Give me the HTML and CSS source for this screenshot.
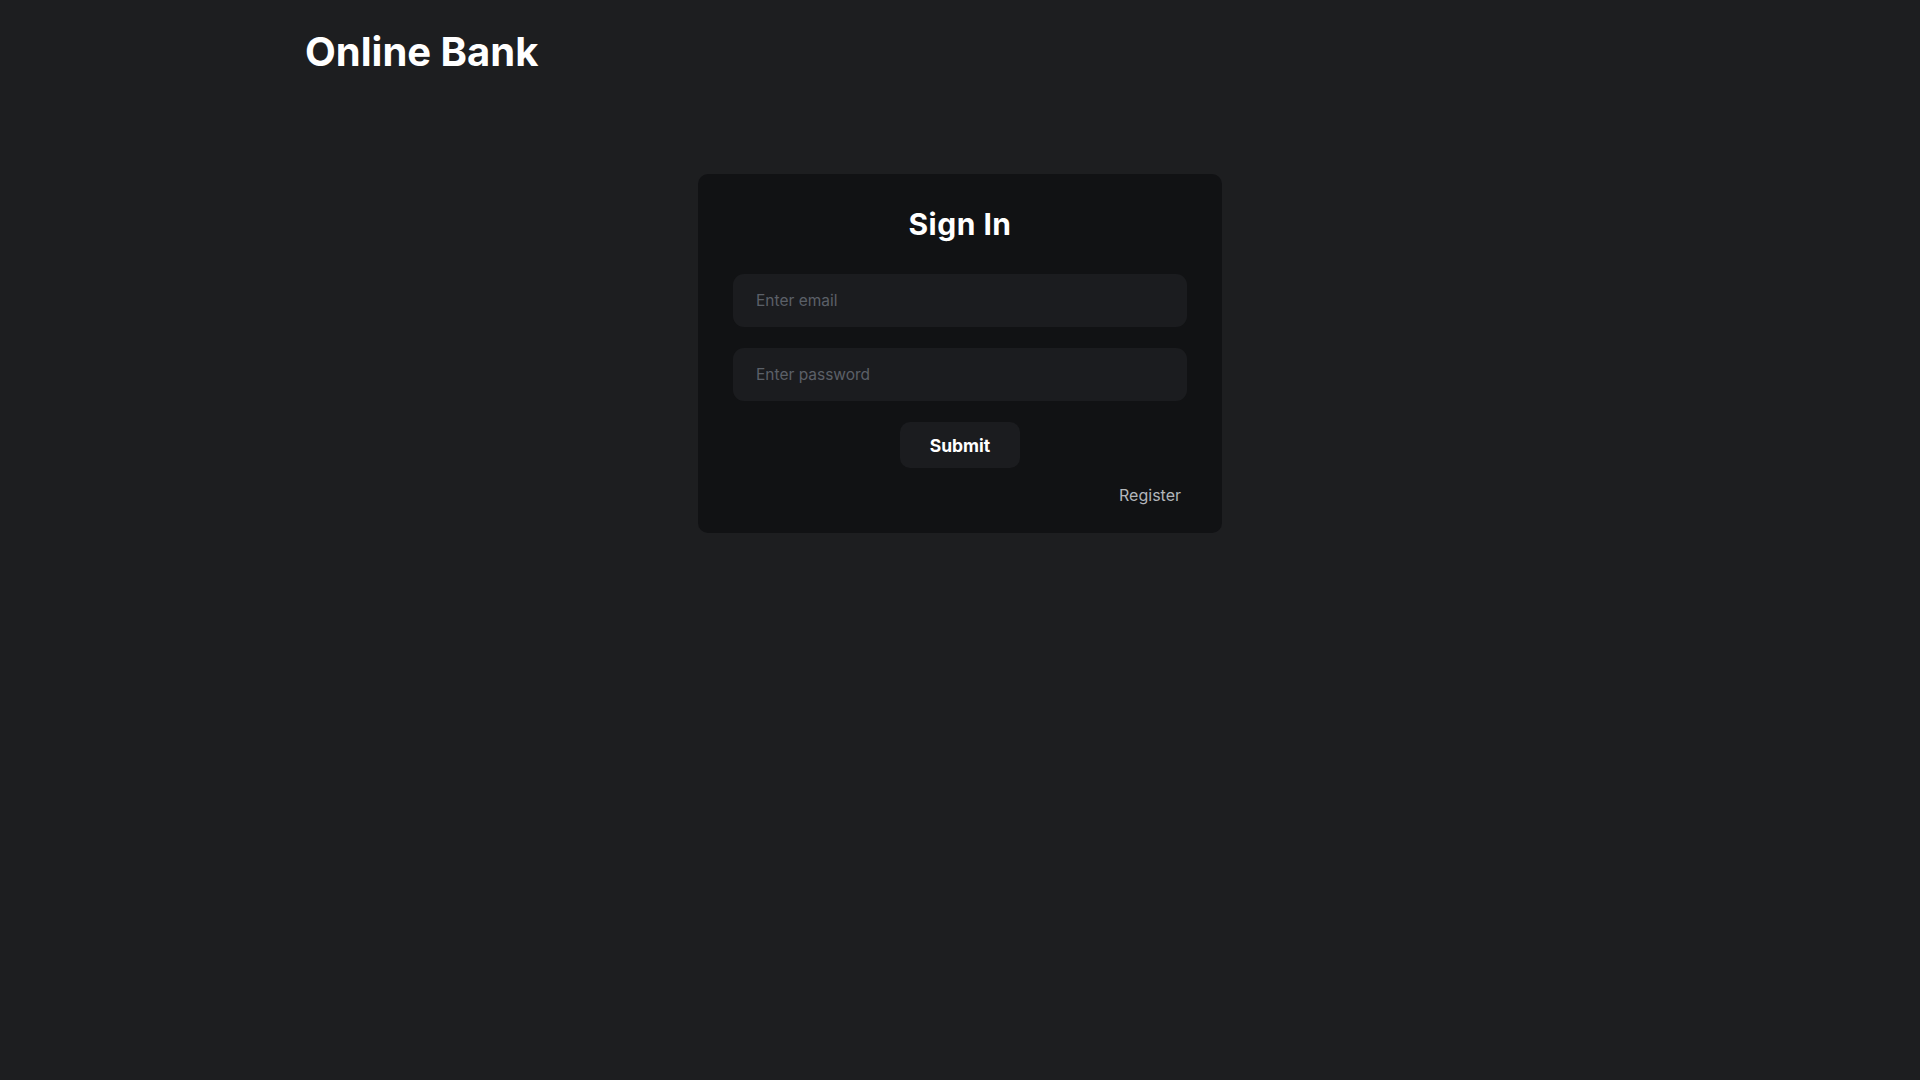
FILE: index.html
```html
<!DOCTYPE html>
<html lang="en">
<head>
<meta charset="utf-8">
<title>Online Bank</title>
<link rel="stylesheet" href="styles.css">
</head>
<body>
  <header class="header">
    <h1 class="brand">Online Bank</h1>
  </header>
  <main class="main">
    <form class="card" onsubmit="return false;">
      <h2 class="card-title">Sign In</h2>
      <input class="field" type="email" placeholder="Enter email">
      <input class="field" type="password" placeholder="Enter password">
      <button class="submit" type="submit">Submit</button>
      <div class="footer-row"><a class="register" href="#">Register</a></div>
    </form>
  </main>
</body>
</html>
```
FILE: styles.css
```css
* { box-sizing: border-box; }
html, body { margin: 0; padding: 0; }
body {
  background: #1d1e20;
  color: #ffffff;
  font-family: Inter, Roboto, "Noto Sans", Arial, sans-serif;
  min-height: 100vh;
}
.header {
  width: 1310px;
  margin: 0 auto;
  padding-top: 27px;
}
.brand {
  margin: 0;
  font-size: 40px;
  line-height: 50px;
  font-weight: 700;
  color: #ffffff;
}
.main {
  display: flex;
  justify-content: center;
  padding-top: 97px;
}
.card {
  width: 524px;
  background: #111214;
  border-radius: 10px;
  padding: 33px 35px 28px;
  display: flex;
  flex-direction: column;
  align-items: stretch;
}
.card-title {
  margin: 0 0 33px;
  text-align: center;
  font-size: 30px;
  line-height: 34px;
  letter-spacing: 0.5px;
  font-weight: 700;
  color: #ffffff;
}
.field {
  height: 53px;
  border: none;
  outline: none;
  border-radius: 11px;
  background: #1b1c1f;
  color: #ffffff;
  font-family: inherit;
  font-size: 15.5px;
  padding: 0 23px;
  margin-bottom: 21px;
}
.field::placeholder { color: #5b6068; }
.submit {
  align-self: center;
  width: 120px;
  height: 46px;
  border: none;
  border-radius: 10px;
  background: #1b1c1f;
  color: #ffffff;
  font-family: inherit;
  font-size: 17.5px;
  font-weight: 700;
  cursor: pointer;
  margin-bottom: 17px;
}
.footer-row {
  display: flex;
  justify-content: flex-end;
  padding-right: 6px;
}
.register {
  color: #b3b6bb;
  text-decoration: none;
  font-size: 16px;
  line-height: 20px;
}
```
